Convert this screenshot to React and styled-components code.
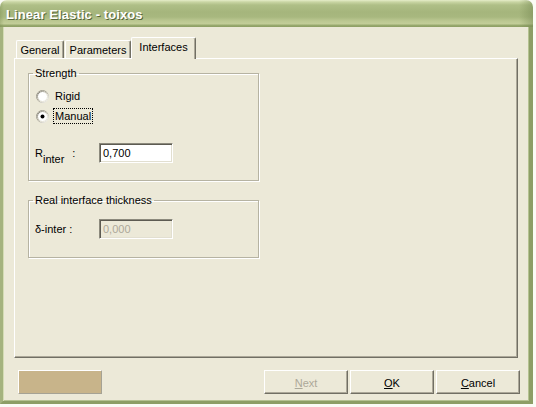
import React from 'react';
import styled, { createGlobalStyle } from 'styled-components';

const Global = createGlobalStyle`
  html, body { margin: 0; padding: 0; background: #fbfbf6; }
  body {
    width: 536px; height: 407px; overflow: hidden;
    font-family: "Liberation Sans", Arial, sans-serif; font-size: 11px; color: #000;
  }
`;

const Window = styled.div`
  width: 533px;
  height: 404px;
  display: flex;
  flex-direction: column;
`;

const TitleBar = styled.div`
  flex: none;
  height: 27px;
  box-sizing: border-box;
  padding: 2px 0 0 6px;
  display: flex;
  align-items: center;
  border-radius: 7px 7px 0 0;
  background:
    linear-gradient(90deg, rgba(120,140,80,0.35) 0, rgba(0,0,0,0) 4px, rgba(0,0,0,0) calc(100% - 14px), rgba(110,130,75,0.45) 100%),
    linear-gradient(180deg, #e6edc9 0, #c9d5a3 2px, #afbf87 5px, #a5b57c 12px, #a8b87f 17px, #bcc892 21px, #c3ce99 24px, #9aab70 25px, #8d9e64 27px);
  color: #fff;
  font-weight: bold;
  font-size: 13px;
  letter-spacing: 0.1px;
  text-shadow: 1px 1px 0 #56653a;
`;

const Frame = styled.div`
  flex: 1;
  min-height: 0;
  display: flex;
  flex-direction: column;
  background: #ece9d8;
  border-left: 3px solid #a5b37f;
  border-right: 4px solid #8d9e66;
  border-bottom: 3px solid #8d9e66;
  box-shadow: inset 1px 0 0 #d4dcb4, inset -1px -1px 0 #b5c291;
  padding: 10px 9px 7px 11px;
`;

const TabStrip = styled.div`
  flex: none;
  height: 21px;
  display: flex;
  align-items: flex-end;
  padding-left: 2px;
`;

const Tab = styled.div`
  box-sizing: border-box;
  width: ${p => p.$w}px;
  margin-left: ${p => p.$ml || 0}px;
  height: ${p => (p.$active ? 22 : 18)}px;
  margin-bottom: ${p => (p.$active ? -1 : 0)}px;
  position: relative;
  z-index: ${p => (p.$active ? 2 : 0)};
  background: #ece9d8;
  border-top: 1px solid #fff;
  border-left: 1px solid #fff;
  border-right: 1px solid #716f64;
  box-shadow: inset -1px 0 0 #aca899;
  border-radius: 2px 2px 0 0;
  display: flex;
  justify-content: center;
  align-items: ${p => (p.$active ? 'flex-start' : 'center')};
  padding-top: ${p => (p.$active ? 3 : 0)}px;
  white-space: nowrap;
`;

const Panel = styled.div`
  box-sizing: border-box;
  height: 300px;
  margin-right: 2px;
  border-top: 1px solid #fff;
  border-left: 1px solid #fff;
  border-right: 1px solid #716f64;
  border-bottom: 1px solid #716f64;
  box-shadow: inset -1px -1px 0 #aca899;
  padding: 8px 0 0 13px;
  display: flex;
  flex-direction: column;
  gap: 13px;
`;

const Group = styled.fieldset`
  box-sizing: border-box;
  width: 231px;
  height: ${p => p.$h}px;
  margin: 0;
  padding: 0 8px 0 6px;
  border: 1px solid #b6b3a2;
  box-shadow: 1px 1px 0 #fff, inset 1px 1px 0 #fff;
  display: flex;
  flex-direction: column;
`;

const Legend = styled.legend`
  margin-left: -2px;
  padding: 0 2px;
  line-height: 13px;
  white-space: nowrap;
`;

const RadioList = styled.div`
  display: flex;
  flex-direction: column;
  gap: 4px;
  margin-top: 8px;
  padding-left: 1px;
`;

const RadioRow = styled.div`
  display: flex;
  align-items: center;
  gap: 4px;
  height: 16px;
`;

const RadioLabel = styled.span`
  box-sizing: border-box;
  height: 16px;
  display: flex;
  align-items: center;
  padding: 0 1px;
  border: 1px dotted ${p => (p.$focus ? '#000' : 'transparent')};
`;

const FieldRow = styled.div`
  display: grid;
  grid-template-columns: 64px 74px;
  align-items: center;
  margin-top: ${p => p.$mt}px;
`;

const FieldLabel = styled.span`
  white-space: nowrap;
  line-height: 13px;
`;

const Sub = styled.span`
  position: relative;
  top: 6px;
  margin-right: 8px;
`;

const TextBox = styled.div`
  box-sizing: border-box;
  height: 20px;
  padding: 0 3px;
  display: flex;
  align-items: center;
  background: ${p => (p.$disabled ? '#ece9d8' : '#fff')};
  color: ${p => (p.$disabled ? '#aca899' : '#000')};
  border-style: solid;
  border-width: 1px;
  border-color: #8c8a7d #fff #fff #8c8a7d;
  box-shadow: inset 1px 1px 0 #5d5b52, inset -1px -1px 0 #e2dfd0;
`;

const Footer = styled.div`
  flex: none;
  display: flex;
  align-items: center;
  gap: 2px;
  margin-top: 12px;
  height: 24px;
`;

const Swatch = styled.div`
  box-sizing: border-box;
  width: 84px;
  height: 24px;
  margin-left: 4px;
  margin-right: auto;
  background: #c8b48a;
  border-top: 1px solid #fff;
  border-left: 1px solid #fff;
  border-right: 1px solid #a5a294;
  border-bottom: 1px solid #a5a294;
`;

const Button = styled.div`
  box-sizing: border-box;
  width: 84px;
  height: 24px;
  display: flex;
  align-items: center;
  justify-content: center;
  background: #ece9d8;
  color: ${p => (p.$disabled ? '#aca899' : '#000')};
  border-top: 1px solid #fff;
  border-left: 1px solid #fff;
  border-right: 1px solid #716f64;
  border-bottom: 1px solid #716f64;
  box-shadow: inset -1px -1px 0 #aca899;
  padding-top: 1px;
`;

const Key = styled.span`
  text-decoration: underline;
`;

function Radio({ checked }) {
  return (
    <svg width="13" height="13" viewBox="0 0 13 13">
      <defs>
        <linearGradient id={checked ? 'rgo1' : 'rgo0'} x1="0" y1="0" x2="1" y2="1">
          <stop offset="0" stopColor="#8c897c" />
          <stop offset="0.5" stopColor="#aca899" />
          <stop offset="1" stopColor="#ffffff" />
        </linearGradient>
        <linearGradient id={checked ? 'rgi1' : 'rgi0'} x1="0" y1="0" x2="1" y2="1">
          <stop offset="0" stopColor="#6e6c61" />
          <stop offset="0.55" stopColor="#d8d5c6" />
          <stop offset="1" stopColor="#f1efe2" />
        </linearGradient>
      </defs>
      <circle cx="6.5" cy="6.5" r="6" fill="#fff" stroke={`url(#${checked ? 'rgo1' : 'rgo0'})`} strokeWidth="1" />
      <circle cx="6.5" cy="6.5" r="5" fill="#fff" stroke={`url(#${checked ? 'rgi1' : 'rgi0'})`} strokeWidth="1" />
      {checked && <circle cx="6.5" cy="6.5" r="2" fill="#000" />}
    </svg>
  );
}

export default function App() {
  return (
    <>
      <Global />
      <Window>
        <TitleBar>Linear Elastic - toixos</TitleBar>
        <Frame>
          <TabStrip>
            <Tab $w={48}>General</Tab>
            <Tab $w={66} $ml={1}>Parameters</Tab>
            <Tab $w={65} $active>Interfaces</Tab>
          </TabStrip>
          <Panel>
            <Group $h={114}>
              <Legend>Strength</Legend>
              <RadioList>
                <RadioRow>
                  <Radio />
                  <RadioLabel>Rigid</RadioLabel>
                </RadioRow>
                <RadioRow>
                  <Radio checked />
                  <RadioLabel $focus>Manual</RadioLabel>
                </RadioRow>
              </RadioList>
              <FieldRow $mt={19}>
                <FieldLabel>
                  R<Sub>inter</Sub>:
                </FieldLabel>
                <TextBox>0,700</TextBox>
              </FieldRow>
            </Group>
            <Group $h={64}>
              <Legend>Real interface thickness</Legend>
              <FieldRow $mt={12}>
                <FieldLabel>δ-inter :</FieldLabel>
                <TextBox $disabled>0,000</TextBox>
              </FieldRow>
            </Group>
          </Panel>
          <Footer>
            <Swatch />
            <Button $disabled><Key>N</Key>ext</Button>
            <Button><Key>O</Key>K</Button>
            <Button><Key>C</Key>ancel</Button>
          </Footer>
        </Frame>
      </Window>
    </>
  );
}
